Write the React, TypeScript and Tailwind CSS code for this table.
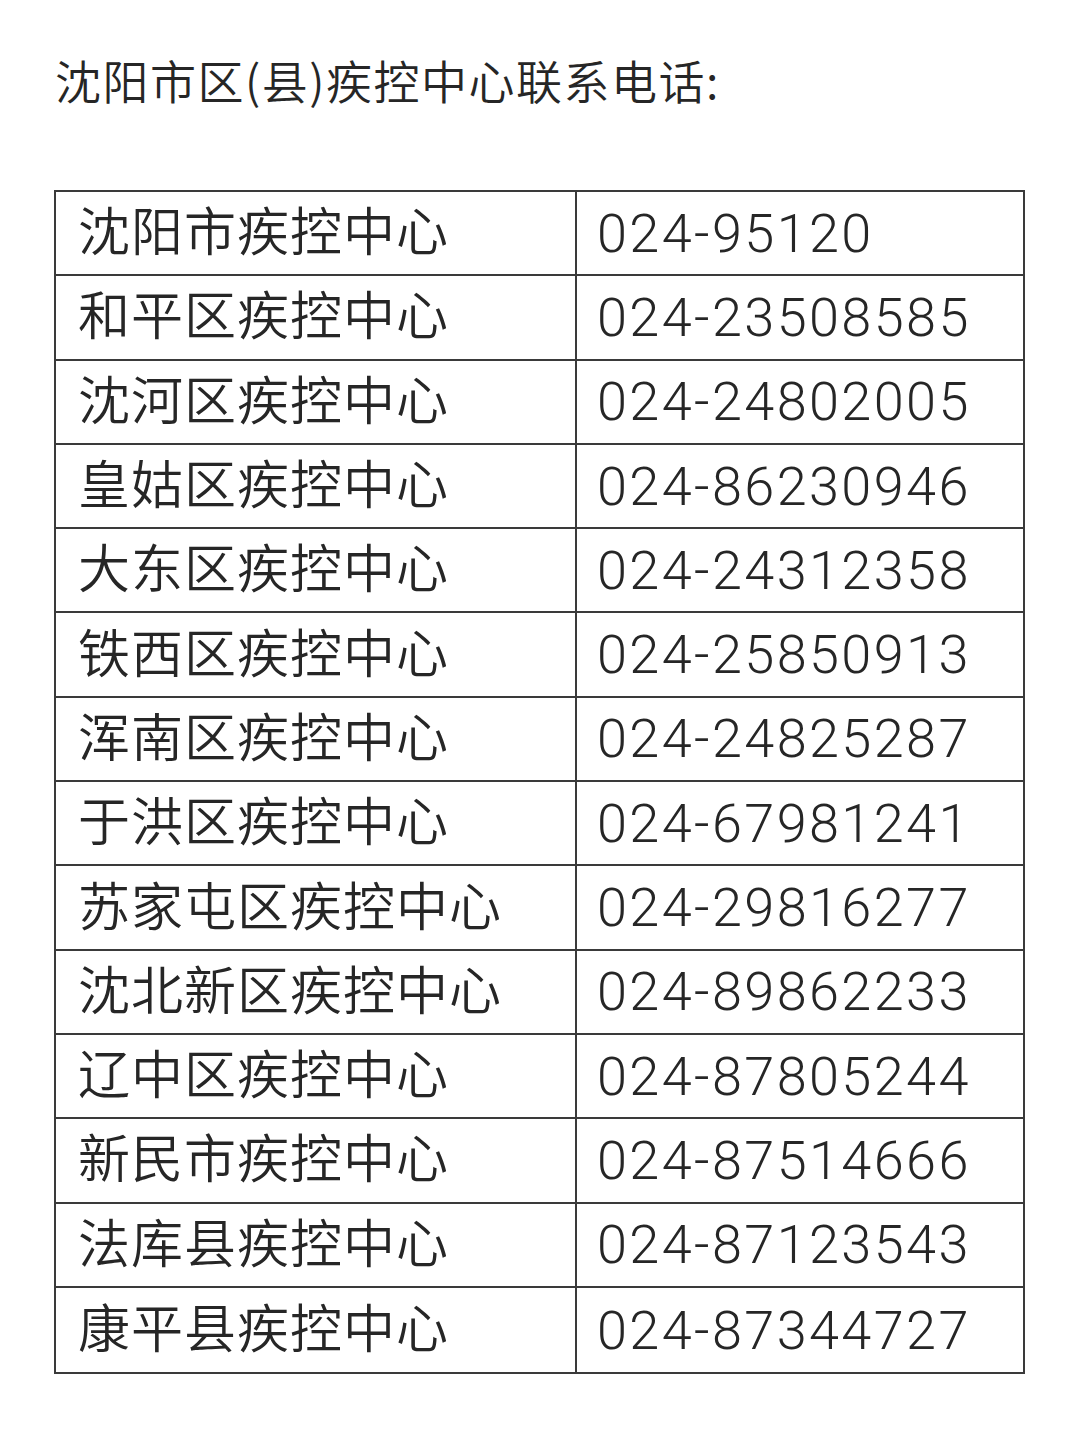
const rows: [string, string][] = [
  ["沈阳市疾控中心", "024-95120"],
  ["和平区疾控中心", "024-23508585"],
  ["沈河区疾控中心", "024-24802005"],
  ["皇姑区疾控中心", "024-86230946"],
  ["大东区疾控中心", "024-24312358"],
  ["铁西区疾控中心", "024-25850913"],
  ["浑南区疾控中心", "024-24825287"],
  ["于洪区疾控中心", "024-67981241"],
  ["苏家屯区疾控中心", "024-29816277"],
  ["沈北新区疾控中心", "024-89862233"],
  ["辽中区疾控中心", "024-87805244"],
  ["新民市疾控中心", "024-87514666"],
  ["法库县疾控中心", "024-87123543"],
  ["康平县疾控中心", "024-87344727"],
];

export default function App() {
  return (
    <div className="w-[1080px] h-[1433px] bg-white text-[#262626] font-['Noto_Sans_CJK_SC',sans-serif]">
      {/* heading */}
      <h1 className="pt-[56px] pl-[55px] text-[46px] leading-none font-[350] tracking-[1.5px]">
        沈阳市区(县)疾控中心联系电话:
      </h1>

      {/* contact table */}
      <div className="mt-[88px] ml-[54px] w-[971px] border-2 border-[#3a3a3a]">
        {rows.map(([name, phone], i) => (
          <div
            key={name}
            className={`flex h-[84.3px] ${i < rows.length - 1 ? "border-b-2 border-[#3a3a3a]" : ""}`}
          >
            <div className="w-[521px] shrink-0 border-r-2 border-[#3a3a3a] pl-[22px] pb-[8px] flex items-center text-[52px] font-[350] tracking-[1px]">
              {name}
            </div>
            <div className="flex-1 pl-[20px] flex items-center text-[54px] font-['Roboto',sans-serif] font-[350] tracking-[2.4px]">
              {phone}
            </div>
          </div>
        ))}
      </div>
    </div>
  );
}
